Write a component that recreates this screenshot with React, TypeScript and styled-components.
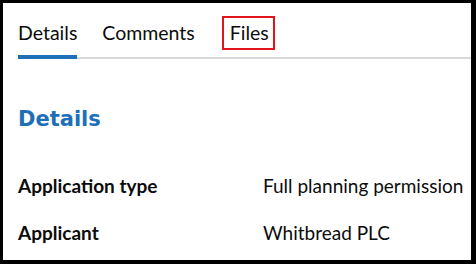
import React from "react";
import styled, { createGlobalStyle } from "styled-components";

const GlobalStyle = createGlobalStyle`
  html, body {
    margin: 0;
    padding: 0;
    background: #ffffff;
  }
  body {
    font-family: Lato, "Open Sans", sans-serif;
    color: #0b0c0c;
  }
`;

const Frame = styled.div`
  box-sizing: border-box;
  width: 476px;
  height: 264px;
  border-style: solid;
  border-color: #000000;
  border-width: 3px 5px 4px 3px;
  padding: 0 0 0 15px;
  overflow: hidden;
  background: #ffffff;
`;

const TabList = styled.div`
  display: flex;
  align-items: flex-end;
  gap: 25px;
  height: 54px;
  border-bottom: 2px solid #d8d8d8;
`;

const Tab = styled.div<{ $active?: boolean; $highlight?: boolean }>`
  position: relative;
  font-size: 19.5px;
  line-height: 24px;
  padding: 0 0 ${(p) => (p.$active ? "10px" : "12px")};
  border-bottom: ${(p) => (p.$active ? "4px solid #1d70b8" : "none")};
  margin-bottom: ${(p) => (p.$active ? "-2px" : "0")};
  ${(p) =>
    p.$highlight &&
    `
    margin-left: 10px;
    &::after {
      content: "";
      position: absolute;
      left: -8px;
      right: -6px;
      top: -5px;
      bottom: 7px;
      border: 2px solid #e3121b;
    }
  `}
`;

const Heading = styled.h2`
  margin: 47px 0 0;
  font-family: "DejaVu Sans", Lato, sans-serif;
  font-weight: 700;
  font-size: 21px;
  line-height: 26px;
  color: #1d70b8;
`;

const SummaryList = styled.dl`
  margin: 42px 0 0;
  display: grid;
  grid-template-columns: 245px 1fr;
  row-gap: 23px;
`;

const Key = styled.dt`
  margin: 0;
  font-weight: 700;
  font-size: 19px;
  line-height: 24px;
`;

const Value = styled.dd`
  margin: 0;
  font-size: 19px;
  line-height: 24px;
  white-space: nowrap;
`;

const rows = [
  { key: "Application type", value: "Full planning permission" },
  { key: "Applicant", value: "Whitbread PLC" },
];

export default function App() {
  return (
    <>
      <GlobalStyle />
      <Frame>
        <TabList>
          <Tab $active>Details</Tab>
          <Tab>Comments</Tab>
          <Tab $highlight>Files</Tab>
        </TabList>
        <Heading>Details</Heading>
        <SummaryList>
          {rows.map((row) => (
            <React.Fragment key={row.key}>
              <Key>{row.key}</Key>
              <Value>{row.value}</Value>
            </React.Fragment>
          ))}
        </SummaryList>
      </Frame>
    </>
  );
}
